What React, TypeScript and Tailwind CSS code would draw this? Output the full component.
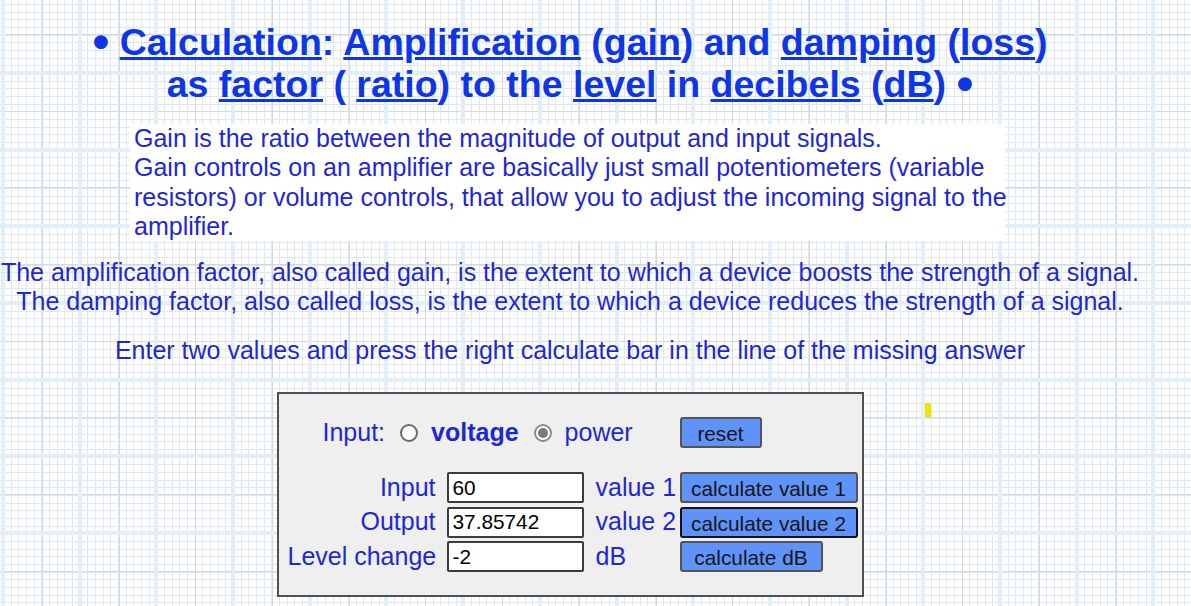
import React from "react";

const gridPaper =
  "[background-image:repeating-linear-gradient(to_right,transparent_0_1px,#e2eef8_1px_5px,transparent_5px_76.7px),repeating-linear-gradient(to_bottom,transparent_0_71px,#e2eef8_71px_75px,transparent_75px_76.7px),repeating-linear-gradient(to_right,transparent_0_42px,#d4d8e3_42px_43px,transparent_43px_76.7px),repeating-linear-gradient(to_bottom,transparent_0_34px,#d4d8e3_34px_35px,transparent_35px_76.7px),repeating-linear-gradient(to_right,transparent_0_3px,#dfe8f1_3px_4px,transparent_4px_7.67px),repeating-linear-gradient(to_bottom,transparent_0_4px,#dfe8f1_4px_5px,transparent_5px_7.67px)]";

const Link: React.FC<{ children: React.ReactNode }> = ({ children }) => (
  <a href="#" className="underline">
    {children}
  </a>
);

// big round dot used at both ends of the heading
const Dot = () => <span className="text-[48px] leading-[0] align-[-3px]">•</span>;

const Radio: React.FC<{ checked?: boolean; className?: string }> = ({ checked, className = "" }) =>
  checked ? (
    <span
      className={
        "flex h-[18px] w-[18px] shrink-0 items-center justify-center rounded-full border-2 border-[#8a8a8a] bg-white " +
        className
      }
    >
      <span className="block h-[10px] w-[10px] rounded-full bg-[#7a7a7a]" />
    </span>
  ) : (
    <span
      className={
        "block h-[18px] w-[18px] shrink-0 rounded-full border-2 border-[#6a6a6a] bg-white " + className
      }
    />
  );

const Field: React.FC<{ value: string }> = ({ value }) => (
  <input
    readOnly
    value={value}
    className="ml-[11px] h-[31px] w-[137px] shrink-0 rounded-[2px] border-2 border-[#3b3b3b] bg-white px-[4px] text-[20.8px] text-black outline-none"
  />
);

const CalcButton: React.FC<{ label: string; width: string; focused?: boolean }> = ({
  label,
  width,
  focused,
}) => (
  <button
    className={
      "ml-[6px] h-[31px] shrink-0 whitespace-nowrap rounded-[3px] border-2 bg-[#5f93f9] text-center text-[20.8px] text-[#151515] " +
      width +
      (focused ? " border-[#141414]" : " border-[#545454]")
    }
  >
    {label}
  </button>
);

const Row: React.FC<{
  label: string;
  value: string;
  unit: string;
  action: string;
  width: string;
  focused?: boolean;
}> = ({ label, value, unit, action, width, focused }) => (
  <div className="flex h-[31px] items-center">
    <span className="w-[148px] shrink-0 whitespace-nowrap text-right">{label}</span>
    <Field value={value} />
    <span className="ml-[12px] w-[78px] shrink-0 whitespace-nowrap">{unit}</span>
    <CalcButton label={action} width={width} focused={focused} />
  </div>
);

export default function App() {
  return (
    <div
      className={
        "min-h-screen w-full bg-white font-['Liberation_Sans',Arial,sans-serif] text-[#1e27d3] " +
        gridPaper
      }
    >
      <div className="flex w-[1140px] flex-col items-center text-center text-[25px] leading-[29.3px]">
        <h1 className="mt-[21px] whitespace-nowrap text-[37.5px] font-bold leading-[42px] text-[#0d36e8]">
          <Dot /> <Link>Calculation</Link>: <Link>Amplification</Link> (<Link>gain</Link>) and{" "}
          <Link>damping</Link> (<Link>loss</Link>)
          <br />
          as <Link>factor</Link> ( <Link>ratio</Link>) to the <Link>level</Link> in{" "}
          <Link>decibels</Link> (<Link>dB</Link>) <Dot />
        </h1>

        <div className="ml-[130px] mt-[19px] w-[875px] self-start whitespace-nowrap bg-white pl-[4px] text-left">
          Gain is the ratio between the magnitude of output and input signals.
          <br />
          Gain controls on an amplifier are basically just small potentiometers (variable
          <br />
          resistors) or volume controls, that allow you to adjust the incoming signal to the
          <br />
          amplifier.
        </div>

        <p className="mt-[17px] whitespace-nowrap">
          The amplification factor, also called gain, is the extent to which a device boosts the
          strength of a signal.
        </p>
        <p className="whitespace-nowrap">
          The damping factor, also called loss, is the extent to which a device reduces the
          strength of a signal.
        </p>

        <p className="mt-[19px] whitespace-nowrap">
          Enter two values and press the right calculate bar in the line of the missing answer
        </p>

        <div className="relative mt-[27px] h-[205px] w-[587px] border-2 border-[#505050] bg-[#efefef] pl-[9px] pt-[23px] text-left">
          <div className="flex h-[31px] items-center">
            <div className="flex w-[386px] shrink-0 items-center pl-[35px]">
              <span>Input:</span>
              <Radio className="ml-[15px]" />
              <span className="ml-[13px] font-bold">voltage</span>
              <Radio checked className="ml-[15px]" />
              <span className="ml-[13px]">power</span>
            </div>
            <CalcButton label="reset" width="w-[82px]" />
          </div>

          <div className="mt-[24px] flex flex-col gap-[3.5px]">
            <Row label="Input" value="60" unit="value 1" action="calculate value 1" width="w-[178px]" />
            <Row
              label="Output"
              value="37.85742"
              unit="value 2"
              action="calculate value 2"
              width="w-[178px]"
              focused
            />
            <Row label="Level change" value="-2" unit="dB" action="calculate dB" width="w-[143px]" />
          </div>

          <span className="absolute left-[646px] top-[9px] h-[14px] w-[6px] bg-[#f0e400]" />
        </div>
      </div>
    </div>
  );
}
